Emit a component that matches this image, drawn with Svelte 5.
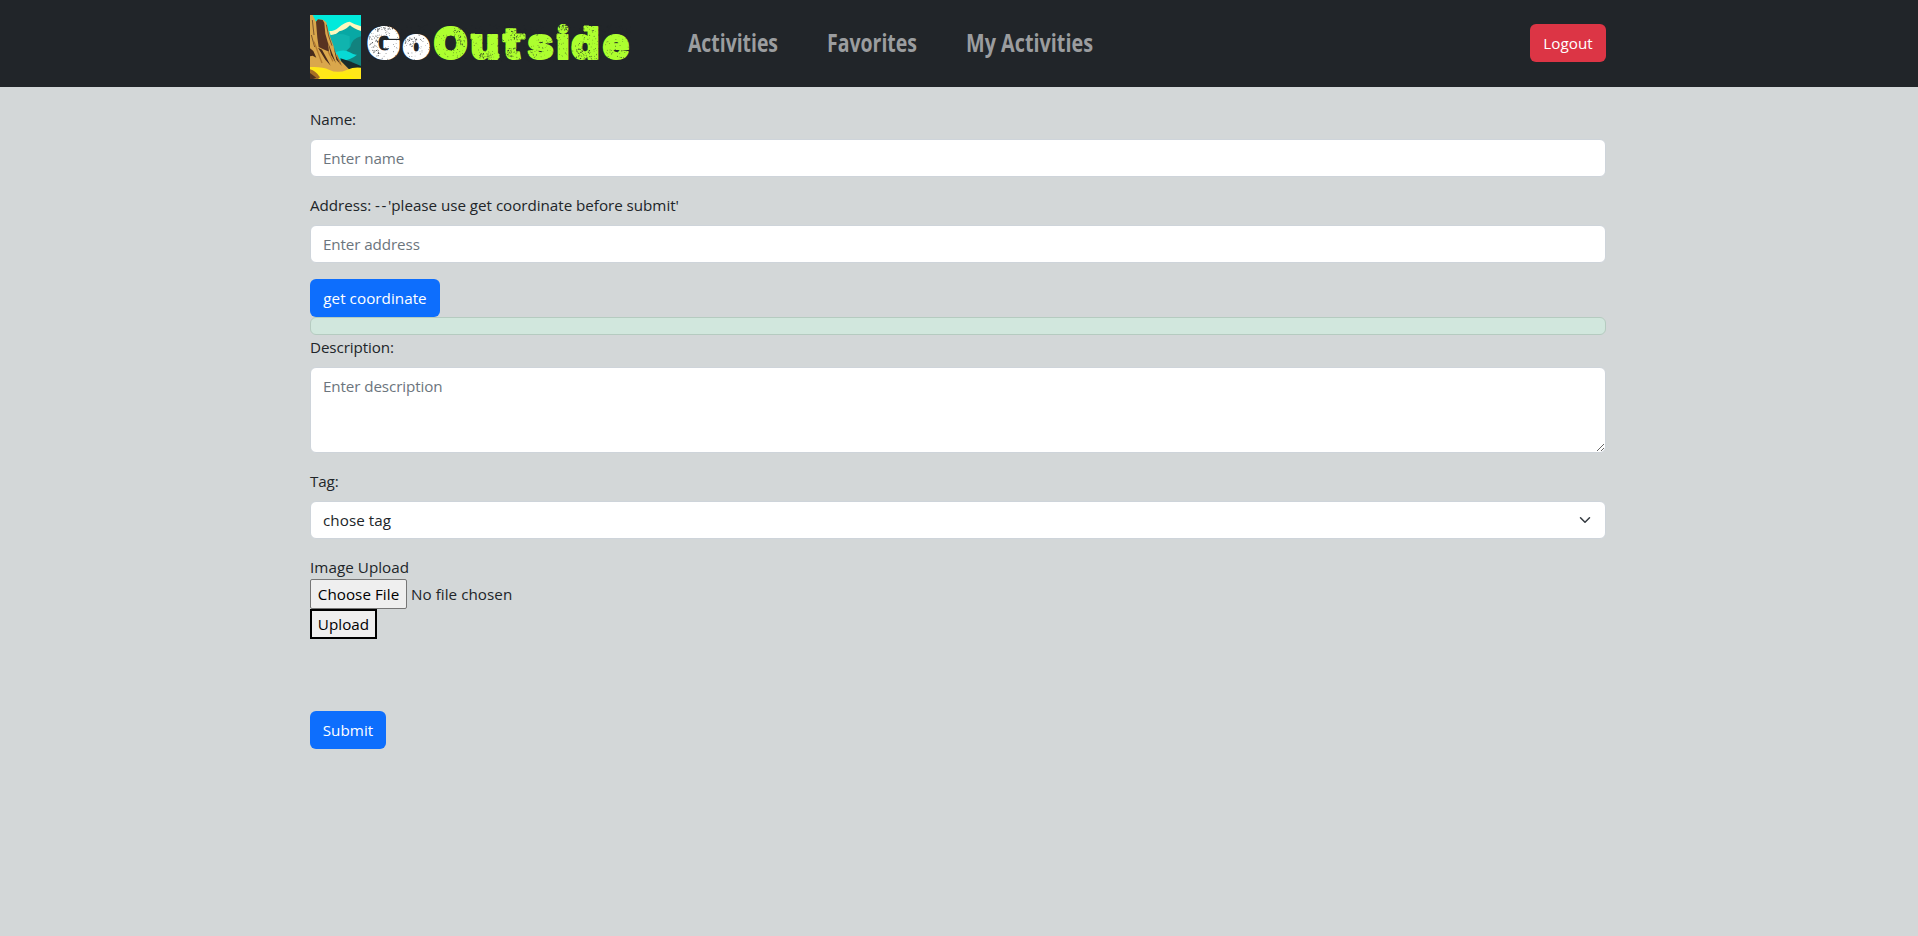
<script>
  let name = $state('');
  let address = $state('');
  let description = $state('');

  const links = [
    { label: 'Activities', width: 90 },
    { label: 'Favorites', width: 90 },
    { label: 'My Activities', width: 127 }
  ];

  // Worn-ink speckles scattered over the wordmark, denser in a few patches.
  let seed = 7;
  const rand = () => (seed = (seed * 16807) % 2147483647) / 2147483647;
  const specks = [];
  for (let i = 0; i < 700; i++) {
    specks.push({ x: rand() * 266, y: 8 + rand() * 37, r: 0.2 + rand() * 0.3 });
  }
  const patches = [[18, 12, 9, 4], [93, 20, 5, 9], [197, 10, 5, 4], [121, 38, 8, 5], [8, 28, 5, 9], [152, 18, 8, 5], [218, 37, 8, 5], [45, 25, 6, 5], [144, 36, 8, 5]];
  for (const [cx, cy, rx, ry] of patches) {
    for (let i = 0; i < 42; i++) {
      specks.push({ x: cx + (rand() * 2 - 1) * rx, y: cy + (rand() * 2 - 1) * ry, r: 0.25 + rand() * 0.3 });
    }
  }
</script>

<nav>
  <div class="container bar">
    <a class="brand" href="#home" aria-label="GoOutside">
      <svg class="canyon" width="51" height="64" viewBox="0 0 153 192" preserveAspectRatio="none">
        <rect width="153" height="192" fill="#00eadb" />
        <path d="M55 70 L84 45 Q103 25 119 23 Q135 26 153 39 V192 H80Z" fill="#08a8a4" />
        <path d="M58 48 Q74 48 85 38 Q104 21 119 20 Q133 28 153 34 V48 Q130 41 120 31 Q105 46 88 49 Q72 64 62 60Z" fill="#fff8bd" />
        <path d="M60 61 Q83 55 101 58 L119 64 V112 H76Z" fill="#10b4ae" />
        <path d="M153 64 Q126 70 121 96 Q103 111 92 137 L153 168Z" fill="#12827e" />
        <path d="M75 112 Q102 101 119 112 Q133 121 141 119 Q121 137 87 139Z" fill="#08d9d5" />
        <path d="M91 130 L119 139 L153 153 V164 H99Z" fill="#182b2b" />
        <path d="M0 0 H8 L18 20 L24 13 L39 14 L49 22 Q57 61 70 91 Q76 121 92 137 L120 166 L95 183 H0Z" fill="#daa74c" />
        <path d="M18 20 L24 13 L38 15 L43 24 L46 56 L54 84 L57 110 L40 103 L26 96 L22 68Z" fill="#583321" />
        <path d="M0 100 L10 108 L19 128 L8 122 L0 124Z M24 98 L36 104 L50 130 L62 152 L46 134Z M54 82 L66 114 L78 145 L63 120Z M71 96 L80 125 L96 153 L79 134Z" fill="#482b1b" />
        <path d="M7 15 L12 60 M4 60 L14 96 M49 29 L56 63 L66 92" stroke="#6a4524" stroke-width="2.5" fill="none" />
        <path d="M12 80 L36 144 M55 111 L69 139 M80 119 L91 145" stroke="#b47b30" stroke-width="4" fill="none" />
        <path d="M0 156 Q37 154 57 164 Q83 177 112 164 Q132 155 153 158 V192 H0Z" fill="#ffe719" />
        <path d="M0 163 Q17 167 30 187 L24 192 H0Z" fill="#a66e24" />
        <path d="M0 174 L19 188 L9 192 H0Z" fill="#4e301d" />
        <path d="M44 192 Q75 173 103 176 Q119 177 143 192Z" fill="#ffed09" />
      </svg>
      <svg class="wordmark" width="268" height="52" viewBox="0 0 268 52">
        <text class="go" x="1 36.5" y="42">Go</text>
        <text class="outside" x="67.5 104.5 137 161.5 190.5 205 236.5" y="42">Outside</text>
        <!-- Slab feet and shoulders -->
        <path class="outside" d="M105 17h4v5h-4z M129 37h4v4h-4z M191 17h3v5h-3z M223 9h-5v5h5z M137 17h22v5h-22z" />
        {#each specks as s}
          <circle cx={s.x} cy={s.y} r={s.r} fill="#212529" />
        {/each}
      </svg>
    </a>
    <div class="links">
      {#each links as link}
        <a href="#nav">
          <svg width={link.width + 8} height="44">
            <text x="4" y="30" textLength={link.width} lengthAdjust="spacingAndGlyphs">{link.label}</text>
          </svg>
        </a>
      {/each}
    </div>
    <button class="btn danger">Logout</button>
  </div>
</nav>

<main class="container">
  <div class="group">
    <label for="name">Name:</label>
    <input id="name" class="control" placeholder="Enter name" bind:value={name} />
  </div>
  <div class="group">
    <label for="address">Address: <span class="dashes">--</span>'please use get coordinate before submit'</label>
    <input id="address" class="control" placeholder="Enter address" bind:value={address} />
  </div>
  <button class="btn primary coordinate">get coordinate</button>
  <div class="alert"></div>
  <div class="group">
    <label for="description">Description:</label>
    <textarea id="description" class="control" placeholder="Enter description" bind:value={description}></textarea>
  </div>
  <div class="group">
    <label for="tag">Tag:</label>
    <div class="select">
      <select id="tag" class="control"><option>chose tag</option></select>
      <svg width="16" height="12" viewBox="0 0 16 16">
        <path d="m2 5 6 6 6-6" fill="none" stroke="#343a40" stroke-width="2" stroke-linecap="round" stroke-linejoin="round" />
      </svg>
    </div>
  </div>
  <div class="upload">
    <div class="caption">Image Upload</div>
    <input class="file" type="file" aria-label="Image Upload" />
    <button class="send">Upload</button>
  </div>
  <button class="btn primary submit">Submit</button>
</main>

<style>
  :global(body) {
    margin: 0;
    background: #d3d7d8;
    color: #212529;
    font: 15.2px/24px "Open Sans", "Noto Sans", sans-serif;
    letter-spacing: -0.1px;
  }
  * { box-sizing: border-box; }
  a { text-decoration: none; }
  button, input, textarea, select { font: inherit; letter-spacing: inherit; margin: 0; }
  .container { width: 1296px; margin: 0 auto 0 310px; }
  nav { height: 87px; background: #212529; }
  .bar { height: 87px; display: flex; align-items: center; }
  .brand { display: flex; align-items: flex-start; height: 64px; margin-top: 7px; }
  .canyon { display: block; }
  .wordmark { display: block; margin: 2px 0 0 5px; }
  .wordmark text { font: 900 44px Inter, sans-serif; letter-spacing: 0; stroke-width: 2px; stroke-linejoin: round; }
  .go { fill: #fff; stroke: #fff; }
  .outside { fill: #adff2f; stroke: #adff2f; stroke-width: 1px; }
  .links { display: flex; gap: 41px; margin: 0 0 0 50px; }
  .links a, .links svg { display: block; }
  .links text { font: 700 24.5px "Open Sans", sans-serif; letter-spacing: 0; fill: #9b9d9f; }
  .btn {
    display: block;
    height: 38px;
    padding: 0;
    border: 0;
    border-radius: 6px;
    color: #fff;
    text-align: center;
    letter-spacing: 0.05px;
  }
  .danger { width: 76px; margin: 0 0 2px auto; background: #dc3545; }
  .primary { background: #0d6efd; }
  .coordinate { width: 130px; }
  .submit { width: 76px; }
  main { padding-top: 20px; }
  .group { display: flex; flex-direction: column; gap: 8px; margin-bottom: 16px; }
  label { height: 24px; }
  label[for="address"] { letter-spacing: -0.03px; }
  .dashes { letter-spacing: 1.6px; }
  .control {
    display: block;
    width: 100%;
    height: 38px;
    padding: 6px 12px;
    border: 1px solid #ced4da;
    border-radius: 6px;
    background: #fff;
    color: #212529;
    outline: 0;
  }
  .control::placeholder { color: #6c757d; opacity: 1; }
  textarea.control { height: 86px; resize: vertical; }
  .alert { height: 18px; border: 1px solid #b5cbc0; border-radius: 6px; background: #d1e7dd; }
  .select { display: grid; align-items: center; }
  .select select, .select svg { grid-area: 1 / 1; }
  .select select { appearance: none; letter-spacing: 0.05px; }
  .select svg { justify-self: end; margin-right: 13px; pointer-events: none; }
  .upload { height: 156px; letter-spacing: 0.05px; }
  .caption { height: 24px; }
  .file { display: block; width: 340px; height: 30px; padding: 0; }
  .file::file-selector-button {
    width: 97px;
    height: 30px;
    margin: 0 4px 0 0;
    padding: 0;
    border: 1px solid #767676;
    border-radius: 2px;
    background: #efefef;
    color: #000;
    font: inherit;
    letter-spacing: inherit;
  }
  .send { display: block; width: 67px; height: 30px; padding: 0; border: 2px solid #000; background: #efefef; color: #000; }
</style>
